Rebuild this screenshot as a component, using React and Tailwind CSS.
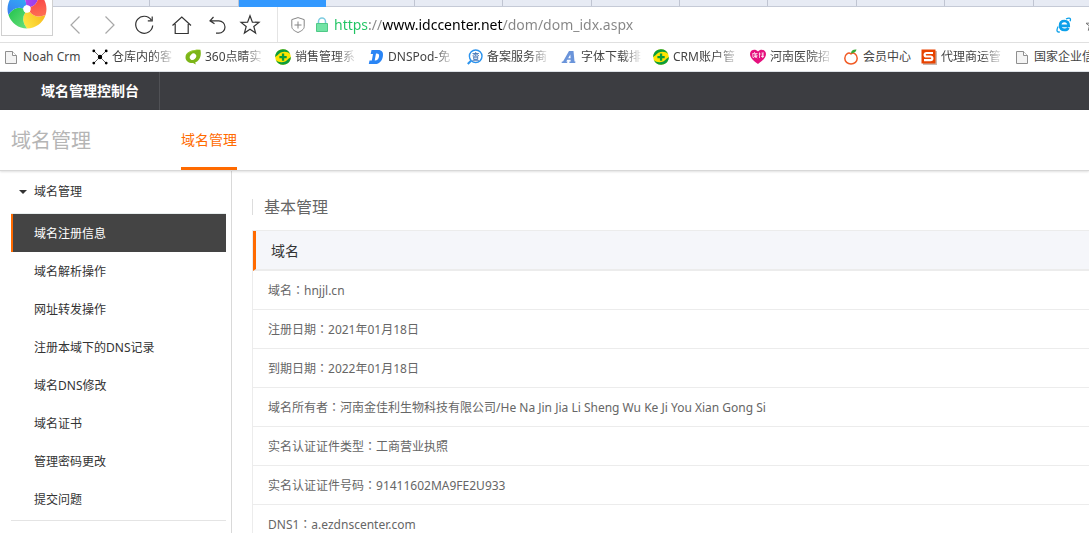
import React from "react";

const TAB_COUNT = 12;
const ACTIVE_TAB = 2;

function FileIcon() {
  return (
    <svg viewBox="0 0 16 16" className="size-4 shrink-0" aria-hidden="true">
      <path d="M2.5 2.5h7l4 4v8h-11z" fill="#f4f4f4" stroke="#8f8f8f" />
      <path d="M9.5 2.5v4h4" fill="#fff" stroke="#8f8f8f" />
    </svg>
  );
}

function NetIcon() {
  return (
    <svg viewBox="0 0 16 16" className="size-4 shrink-0" aria-hidden="true">
      <path d="M2 2l12 12M14 2L2 14" stroke="#555" strokeWidth="0.9" />
      <g fill="#000">
        <circle cx="8" cy="8" r="2.2" />
        <circle cx="1.8" cy="1.9" r="1.4" />
        <circle cx="14.2" cy="1.9" r="1.4" />
        <circle cx="1.8" cy="14.1" r="1.4" />
        <circle cx="14.2" cy="14.1" r="1.4" />
      </g>
    </svg>
  );
}

function LeafIcon() {
  return (
    <svg viewBox="0 0 16 16" className="size-4 shrink-0" aria-hidden="true">
      <path d="M15.4.8c.9 3.600 .4 8-2.200 10.600-.9.9-1.900 1.500-2.900 1.900l.4 2.200-2.600-1.600C4.200 14.300.5 12 .5 8.400.5 3.300 6 .6 15.400.8z" fill="#7cb518" />
      <path d="M15.400.8C8 .3 2 3 1 7c2-3.600 7-5.600 14.400-6.200z" fill="#a9d83e" />
      <ellipse cx="8" cy="7.700" rx="3.500" ry="2.800" transform="rotate(-45 8 7.700)" fill="#fff" />
    </svg>
  );
}

function PlusBallIcon() {
  return (
    <svg viewBox="0 0 16 16" className="size-4 shrink-0" aria-hidden="true">
      <circle cx="8" cy="8" r="7.800" fill="#ffe500" />
      <path d="M.5 5.500A7.900 7.900 0 0 1 15.200 5C12 1.800 6 1.800 2.500 6.200L0 8z" fill="#0c9d3c" />
      <path d="M15.500 10.500A7.900 7.900 0 0 1 .8 11c3.200 3.200 9.200 3.200 12.700-1.200L16 8z" fill="#0c9d3c" />
      <path d="M6.900 4.500h2.300v2.400h2.500v2.300H9.200v2.500H6.900V9.200H4.400V6.900h2.500z" fill="#0c9d3c" />
    </svg>
  );
}

function DnspodIcon() {
  return (
    <svg viewBox="0 0 16 16" className="size-4 shrink-0" aria-hidden="true">
      <path fillRule="evenodd" d="M3.500 1H10c4 0 5.600 2.400 4.900 6.200C14.100 11.800 11.500 15 7.200 15H.8l.7-3.500h2.300L5 5H2.700zM8 4.500l-1.300 7c2.400.2 3.800-1.100 4.300-3.700.5-2.400-.4-3.500-3-3.300z" fill="#2a85f5" />
    </svg>
  );
}

function SearchDocIcon() {
  return (
    <svg viewBox="0 0 16 16" className="size-4 shrink-0" fill="none" aria-hidden="true">
      <circle cx="8.700" cy="7.300" r="6.300" stroke="#2b93ee" strokeWidth="1.400" />
      <path d="M4 11.800L.8 15" stroke="#2b93ee" strokeWidth="2" />
      <path d="M5.500 4.500h6.400M8.700 3v4M8.500 4.600L5.500 6.800M8.900 4.600l3 2.200M6.700 7.200h4v3.300h-4zM6.700 8.800h4M5.300 11.700h6.800" stroke="#4778b8" strokeWidth="0.900" />
    </svg>
  );
}

function LetterMarkIcon() {
  return (
    <svg viewBox="0 0 16 16" className="size-4 shrink-0" aria-hidden="true">
      <path fillRule="evenodd" d="M8 2h4.500l1 10.500h1l-.3 1.500H8.300l.3-1.500h1.100l-.1-1.800H6.300l-1.100 1.800h1.200L6.100 14H.6l.3-1.500H2zM9.300 5.500L7.200 9.200h2.400z" fill="#6a94da" />
    </svg>
  );
}

function HeartIcon() {
  return (
    <svg viewBox="0 0 16 16" className="size-4 shrink-0" fill="none" aria-hidden="true">
      <path d="M8 15C3 11.500 0 8.500 0 5 0 .5 5.500-.5 8 2.500 10.500-.5 16 .5 16 5c0 3.500-3 6.500-8 10z" fill="#e5107d" />
      <path d="M4.500 3v1M2.500 4.500h5M2.800 4.500v4M4 6h3v1.500H4M5.300 5v4M4 8l-1 1M6 8l1.300 1M9.500 3.500v5.500M8.700 5h2M11.500 4h2.500M11.500 6h2.500M12.700 4v5M11 7.500h3" stroke="#fff" strokeWidth="0.700" />
    </svg>
  );
}

function FruitIcon() {
  return (
    <svg viewBox="0 0 16 16" className="size-4 shrink-0" fill="none" aria-hidden="true">
      <path d="M8 4.800C5.500 3 1.800 5 1.800 9.300 1.800 12.600 4.500 15 8 15s6.200-2.400 6.200-5.700C14.200 5 10.500 3 8 4.800z" stroke="#f15a24" strokeWidth="1.500" />
      <path d="M8 4.500C8 1.500 10 .3 13.500.5 13 3 11 4.200 8 4.500z" fill="#39a935" />
    </svg>
  );
}

function SquareSIcon() {
  return (
    <svg viewBox="0 0 16 16" className="size-4 shrink-0" fill="none" aria-hidden="true">
      <path d="M2 2h14v14H2z" fill="#c9b8b0" />
      <path d="M.5.5h14v14H.5z" fill="#e84300" />
      <path d="M12 4H5.500C3 4 3 7.500 5.500 7.500h4c2.500 0 2.500 3.700 0 3.700H3" stroke="#fff" strokeWidth="2.200" />
    </svg>
  );
}

const bookmarks = [
  { label: "Noah Crm", Icon: FileIcon, width: "w-[59px]", fade: false },
  { label: "仓库内的客", Icon: NetIcon, width: "w-[63px]", fade: true },
  { label: "360点睛实", Icon: LeafIcon, width: "w-[60px]", fade: true },
  { label: "销售管理系", Icon: PlusBallIcon, width: "w-[63px]", fade: true },
  { label: "DNSPod-免", Icon: DnspodIcon, width: "w-[69px]", fade: true },
  { label: "备案服务商", Icon: SearchDocIcon, width: "w-[64px]", fade: true },
  { label: "字体下载排", Icon: LetterMarkIcon, width: "w-[62px]", fade: true },
  { label: "CRM账户管", Icon: PlusBallIcon, width: "w-[67px]", fade: true },
  { label: "河南医院招", Icon: HeartIcon, width: "w-[63px]", fade: true },
  { label: "会员中心", Icon: FruitIcon, width: "w-[48px]", fade: false },
  { label: "代理商运管", Icon: SquareSIcon, width: "w-[63px]", fade: true },
  { label: "国家企业信", Icon: FileIcon, width: "w-[63px]", fade: false },
];

const menu = [
  "域名注册信息",
  "域名解析操作",
  "网址转发操作",
  "注册本域下的DNS记录",
  "域名DNS修改",
  "域名证书",
  "管理密码更改",
  "提交问题",
];

const details = [
  ["域名", "hnjjl.cn"],
  ["注册日期", "2021年01月18日"],
  ["到期日期", "2022年01月18日"],
  ["域名所有者", "河南金佳利生物科技有限公司/He Na Jin Jia Li Sheng Wu Ke Ji You Xian Gong Si"],
  ["实名认证证件类型", "工商营业执照"],
  ["实名认证证件号码", "91411602MA9FE2U933"],
  ["DNS1", "a.ezdnscenter.com"],
];

const BLADES = [
  { id: "yellow", from: "#fff04a", to: "#f7b81c" },
  { id: "green", from: "#1fc24d", to: "#6be07a" },
  { id: "blue", from: "#2fb6f7", to: "#3b7cf0" },
  { id: "purple", from: "#8a3cf0", to: "#c94be8" },
  { id: "red", from: "#ff7a55", to: "#f83a45" },
];

function BrowserLogo() {
  return (
    <svg viewBox="0 0 40 40" className="size-10 shrink-0" aria-hidden="true">
      <defs>
        {BLADES.map(({ id, from, to }) => (
          <linearGradient key={id} id={`blade-${id}`} x1="0" y1="1" x2="1" y2="0">
            <stop offset="0" stopColor={from} />
            <stop offset="1" stopColor={to} />
          </linearGradient>
        ))}
      </defs>
      {BLADES.map(({ id }, i) => (
        <path
          key={id}
          d="M23.6 21.7Q31 27 39.500 20A19.500 19.500 0 0 1 26 38.500Q16.700 32.600 19.500 23.900Z"
          fill={`url(#blade-${id})`}
          transform={`rotate(${i * 72 + 18} 20 20)`}
        />
      ))}
      <circle cx="20" cy="20" r="3.700" fill="#fff" />
    </svg>
  );
}

function ToolButton({ label, muted, children }) {
  return (
    <button type="button" aria-label={label} className={muted ? "text-[#a8a8a8]" : "text-[#333]"}>
      <svg viewBox="0 0 24 24" className="size-6" fill="none" stroke="currentColor" strokeWidth="1.200" aria-hidden="true">
        {children}
      </svg>
    </button>
  );
}

const STAR = "M12 2.800l2.400 6.300 6.600.3-5.200 4.100 1.800 6.500L12 16.300 6.400 20l1.800-6.500L3 9.400l6.600-.3z";

function BrowserChrome() {
  return (
    <header className="shrink-0">
      <div className="flex border-b border-[#e0e0e0]">
        <div className="flex w-[53px] shrink-0 bg-white pl-px">
          <div className="flex h-9 w-full items-end justify-center overflow-hidden border border-t-0 border-[#d0d0d0] pb-1.5">
            <BrowserLogo />
          </div>
        </div>
        <div className="min-w-0 flex-1 overflow-hidden">
          <div className="flex h-[7px] border-b border-[#c5cad6] bg-[#e7ebf4] pl-[9px]">
            <div className="-mr-[33px] flex flex-1">
              {Array.from({ length: TAB_COUNT }, (_, i) => (
                <div
                  key={i}
                  className={i === ACTIVE_TAB ? "h-[7px] flex-1 bg-[#3399ff]" : "flex-1 border-r border-[#c0c5d2]"}
                />
              ))}
            </div>
          </div>
          <div className="flex h-[35px] items-center pl-[10px]">
            <div className="flex shrink-0 items-center gap-[11px]">
              <ToolButton label="后退" muted>
                <path d="M16.500 3.500L8 12l8.500 8.500" />
              </ToolButton>
              <ToolButton label="前进" muted>
                <path d="M7.500 3.500L16 12l-8.500 8.500" />
              </ToolButton>
              <ToolButton label="刷新">
                <path d="M19.700 12.500A8.500 8.500 0 1 1 18.200 6.900M19.200 3.500v4.300h-4.400" />
              </ToolButton>
              <ToolButton label="主页">
                <path d="M4.500 12.500L13.800 4l9.200 8.500M7.200 11v9.500h13V11" />
              </ToolButton>
              <ToolButton label="恢复">
                <path d="M10.500 4L7 7.800l4.500 3M7 7.800h8.800a6.200 6.200 0 0 1 0 12.400H13" />
              </ToolButton>
              <ToolButton label="收藏">
                <path d={STAR} />
              </ToolButton>
            </div>
            <div className="ml-[15px] flex h-full min-w-0 flex-1 items-center border-l border-[#e4e4e4] pl-3">
              <svg viewBox="0 0 16 16" className="size-4 shrink-0" fill="none" stroke="#858585" aria-hidden="true">
                <path d="M8 .6l6.200 2v6.900c0 3-3.200 4.700-6.200 6-3-1.300-6.200-3-6.200-6V2.600z" />
                <path d="M8 4.500v7M4.500 8h7" />
              </svg>
              <svg viewBox="0 0 16 16" className="ml-2 size-4 shrink-0" fill="none" aria-hidden="true">
                <path d="M4.500 7V4.500a3.500 3.500 0 0 1 7 0V7" stroke="#7ccbe0" strokeWidth="1.500" />
                <path d="M2.500 6.500h11v8h-11z" fill="#71e3a5" stroke="#4fc987" />
              </svg>
              <input
                type="text"
                aria-label="地址栏"
                defaultValue="https://www.idccenter.net/dom/dom_idx.aspx"
                className="ml-1 h-6 min-w-0 flex-1 bg-[linear-gradient(90deg,#1fc462_34px,#858585_34px,#858585_49px,#000_49px,#000_169px,#858585_169px)] bg-clip-text text-sm text-transparent outline-none"
              />
              <div className="-mr-[11px] flex shrink-0 items-center gap-3">
                <button type="button" aria-label="兼容模式">
                  <svg viewBox="0 0 16 16" className="size-4" fill="none" aria-hidden="true">
                    <path d="M3 8.900h9.700C12.700 5.500 11 4 8.400 4 5.800 4 4.100 5.700 4.100 8.500s1.700 4.400 4.400 4.400c1.800 0 3.200-.7 3.900-2.100" stroke="#0ba0ea" strokeWidth="2.700" />
                    <path d="M2.200 9.500C.2 13 .7 15.800 3.800 14.800M10 2C12.500.6 14.500.8 14.500 2.400c0 .7-.2 1.300-.5 1.900" stroke="#0ba0ea" strokeWidth="1.300" />
                  </svg>
                </button>
                <button type="button" aria-label="收藏网址" className="text-[#777]">
                  <svg viewBox="0 0 24 24" className="size-4" fill="none" stroke="currentColor" strokeWidth="1.500" aria-hidden="true">
                    <path d={STAR} />
                  </svg>
                </button>
              </div>
            </div>
          </div>
        </div>
      </div>
      <nav aria-label="书签" className="flex h-[29px] items-center gap-[10px] overflow-hidden border-b border-[#dde1e6] pl-[3px]">
        {bookmarks.map(({ label, Icon, width, fade }) => (
          <a key={label} href="#" className="flex shrink-0 items-center gap-1 text-xs text-[#444]">
            <Icon />
            <span className={`${width} whitespace-nowrap ${fade ? "overflow-hidden [mask-image:linear-gradient(90deg,#000_65%,transparent)]" : ""}`}>
              {label}
            </span>
          </a>
        ))}
      </nav>
    </header>
  );
}

export default function App() {
  return (
    <div
      lang="zh-CN"
      className="flex h-screen flex-col overflow-hidden bg-white font-['Noto_Sans','Noto_Sans_CJK_SC',sans-serif] text-xs text-[#333]"
    >
      <BrowserChrome />

      <div className="flex h-[38px] shrink-0 bg-[#3c3d41]">
        <a href="#" className="flex w-40 items-center border-r border-[#505155] pl-[41px] text-sm font-bold text-white">
          域名管理控制台
        </a>
      </div>

      <div className="z-10 flex h-[61px] shrink-0 border-b border-[#d8d8d8] pl-[11px] shadow-[0_1px_2px_rgba(0,0,0,0.12)]">
        <h1 className="flex w-[170px] items-center pt-0.5 text-xl text-[#b5b5b5]">域名管理</h1>
        <a href="#" className="flex items-center border-b-3 border-[#ff6a00] pt-0.5 text-sm text-[#ff6a00]">
          域名管理
        </a>
      </div>

      <div className="flex min-h-0 flex-1 overflow-hidden">
        <aside className="w-[232px] shrink-0 border-r border-[#d9d9d9] pr-[5px] pl-[11px]">
          <nav aria-label="域名管理" className="border-b border-[#e4e4e4] pb-[2px]">
            <button type="button" className="flex h-[43px] w-full items-center border-b border-[#e8eeee] pl-2 text-left">
              <svg viewBox="0 0 8 4" className="mr-[7px] h-1 w-2" aria-hidden="true">
                <path d="M0 0h8L4 4z" fill="#333" />
              </svg>
              域名管理
            </button>
            <ul>
              {menu.map((item, i) => (
                <li key={item}>
                  <a
                    href="#"
                    aria-current={i === 0 ? "page" : undefined}
                    className={
                      i === 0
                        ? "flex h-[38px] items-center border-l-2 border-[#ff6a00] bg-[#444] pt-0.5 pl-[21px] text-white"
                        : "flex h-[38px] items-center pt-0.5 pl-[23px]"
                    }
                  >
                    {item}
                  </a>
                </li>
              ))}
            </ul>
          </nav>
        </aside>

        <main className="min-w-0 flex-1 pt-7 pl-5">
          <h2 className="flex h-4 items-center border-l border-[#ddd] pl-[11px] text-base text-[#666]">基本管理</h2>
          <table className="mt-[15px] w-full border-separate border-spacing-0 border-t border-l border-[#ececec]">
            <thead>
              <tr>
                <th className="h-10 border-b-2 border-l-3 border-b-[#ececec] border-l-[#ff6a00] bg-[#f5f6fa] pt-0.5 pl-[15px] text-left text-sm font-normal">
                  域名
                </th>
              </tr>
            </thead>
            <tbody>
              {details.map(([name, value]) => (
                <tr key={name}>
                  <td className="h-[39px] border-b border-[#ececec] pl-[15px] text-[#666]">
                    {name}
                    <span className="font-['Noto_Sans_CJK_TC',sans-serif]" lang="zh-TW">：</span>
                    {value}
                  </td>
                </tr>
              ))}
            </tbody>
          </table>
        </main>
      </div>
    </div>
  );
}
